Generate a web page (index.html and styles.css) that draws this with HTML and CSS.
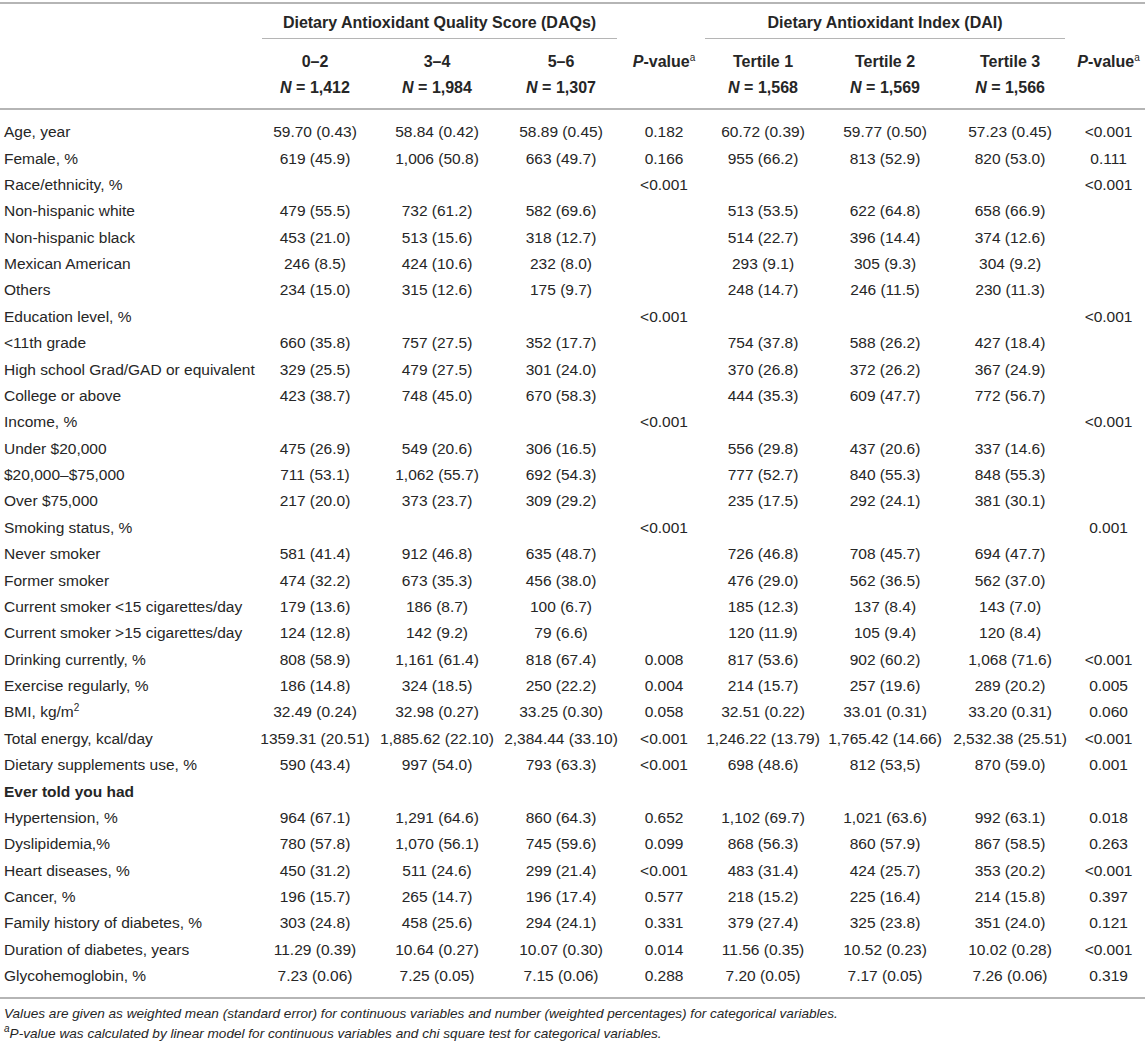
FILE: index.html
```html
<!DOCTYPE html>
<html>
<head>
<meta charset="utf-8">
<link rel="stylesheet" href="styles.css">
</head>
<body>
<table class="tbl">
  <colgroup>
    <col class="c-label"><col class="c-a"><col class="c-b"><col class="c-c"><col class="c-p1"><col class="c-t1"><col class="c-t2"><col class="c-t3"><col class="c-p2">
  </colgroup>
  <thead>
    <tr class="h1">
      <th></th>
      <th colspan="3"><div class="grp grp-a">Dietary Antioxidant Quality Score (DAQs)</div></th>
      <th></th>
      <th colspan="3"><div class="grp grp-b">Dietary Antioxidant Index (DAI)</div></th>
      <th></th>
    </tr>
    <tr class="h2">
      <th></th>
      <th>0–2<br><i>N</i> = 1,412</th>
      <th>3–4<br><i>N</i> = 1,984</th>
      <th>5–6<br><i>N</i> = 1,307</th>
      <th><i>P</i>-value<sup>a</sup></th>
      <th>Tertile 1<br><i>N</i> = 1,568</th>
      <th>Tertile 2<br><i>N</i> = 1,569</th>
      <th>Tertile 3<br><i>N</i> = 1,566</th>
      <th><i>P</i>-value<sup>a</sup></th>
    </tr>
  </thead>
  <tbody>
    <tr><td>Age, year</td><td>59.70 (0.43)</td><td>58.84 (0.42)</td><td>58.89 (0.45)</td><td>0.182</td><td>60.72 (0.39)</td><td>59.77 (0.50)</td><td>57.23 (0.45)</td><td>&lt;0.001</td></tr>
    <tr><td>Female, %</td><td>619 (45.9)</td><td>1,006 (50.8)</td><td>663 (49.7)</td><td>0.166</td><td>955 (66.2)</td><td>813 (52.9)</td><td>820 (53.0)</td><td>0.111</td></tr>
    <tr><td>Race/ethnicity, %</td><td></td><td></td><td></td><td>&lt;0.001</td><td></td><td></td><td></td><td>&lt;0.001</td></tr>
    <tr><td>Non-hispanic white</td><td>479 (55.5)</td><td>732 (61.2)</td><td>582 (69.6)</td><td></td><td>513 (53.5)</td><td>622 (64.8)</td><td>658 (66.9)</td><td></td></tr>
    <tr><td>Non-hispanic black</td><td>453 (21.0)</td><td>513 (15.6)</td><td>318 (12.7)</td><td></td><td>514 (22.7)</td><td>396 (14.4)</td><td>374 (12.6)</td><td></td></tr>
    <tr><td>Mexican American</td><td>246 (8.5)</td><td>424 (10.6)</td><td>232 (8.0)</td><td></td><td>293 (9.1)</td><td>305 (9.3)</td><td>304 (9.2)</td><td></td></tr>
    <tr><td>Others</td><td>234 (15.0)</td><td>315 (12.6)</td><td>175 (9.7)</td><td></td><td>248 (14.7)</td><td>246 (11.5)</td><td>230 (11.3)</td><td></td></tr>
    <tr><td>Education level, %</td><td></td><td></td><td></td><td>&lt;0.001</td><td></td><td></td><td></td><td>&lt;0.001</td></tr>
    <tr><td>&lt;11th grade</td><td>660 (35.8)</td><td>757 (27.5)</td><td>352 (17.7)</td><td></td><td>754 (37.8)</td><td>588 (26.2)</td><td>427 (18.4)</td><td></td></tr>
    <tr><td>High school Grad/GAD or equivalent</td><td>329 (25.5)</td><td>479 (27.5)</td><td>301 (24.0)</td><td></td><td>370 (26.8)</td><td>372 (26.2)</td><td>367 (24.9)</td><td></td></tr>
    <tr><td>College or above</td><td>423 (38.7)</td><td>748 (45.0)</td><td>670 (58.3)</td><td></td><td>444 (35.3)</td><td>609 (47.7)</td><td>772 (56.7)</td><td></td></tr>
    <tr><td>Income, %</td><td></td><td></td><td></td><td>&lt;0.001</td><td></td><td></td><td></td><td>&lt;0.001</td></tr>
    <tr><td>Under $20,000</td><td>475 (26.9)</td><td>549 (20.6)</td><td>306 (16.5)</td><td></td><td>556 (29.8)</td><td>437 (20.6)</td><td>337 (14.6)</td><td></td></tr>
    <tr><td>$20,000–$75,000</td><td>711 (53.1)</td><td>1,062 (55.7)</td><td>692 (54.3)</td><td></td><td>777 (52.7)</td><td>840 (55.3)</td><td>848 (55.3)</td><td></td></tr>
    <tr><td>Over $75,000</td><td>217 (20.0)</td><td>373 (23.7)</td><td>309 (29.2)</td><td></td><td>235 (17.5)</td><td>292 (24.1)</td><td>381 (30.1)</td><td></td></tr>
    <tr><td>Smoking status, %</td><td></td><td></td><td></td><td>&lt;0.001</td><td></td><td></td><td></td><td>0.001</td></tr>
    <tr><td>Never smoker</td><td>581 (41.4)</td><td>912 (46.8)</td><td>635 (48.7)</td><td></td><td>726 (46.8)</td><td>708 (45.7)</td><td>694 (47.7)</td><td></td></tr>
    <tr><td>Former smoker</td><td>474 (32.2)</td><td>673 (35.3)</td><td>456 (38.0)</td><td></td><td>476 (29.0)</td><td>562 (36.5)</td><td>562 (37.0)</td><td></td></tr>
    <tr><td>Current smoker &lt;15 cigarettes/day</td><td>179 (13.6)</td><td>186 (8.7)</td><td>100 (6.7)</td><td></td><td>185 (12.3)</td><td>137 (8.4)</td><td>143 (7.0)</td><td></td></tr>
    <tr><td>Current smoker &gt;15 cigarettes/day</td><td>124 (12.8)</td><td>142 (9.2)</td><td>79 (6.6)</td><td></td><td>120 (11.9)</td><td>105 (9.4)</td><td>120 (8.4)</td><td></td></tr>
    <tr><td>Drinking currently, %</td><td>808 (58.9)</td><td>1,161 (61.4)</td><td>818 (67.4)</td><td>0.008</td><td>817 (53.6)</td><td>902 (60.2)</td><td>1,068 (71.6)</td><td>&lt;0.001</td></tr>
    <tr><td>Exercise regularly, %</td><td>186 (14.8)</td><td>324 (18.5)</td><td>250 (22.2)</td><td>0.004</td><td>214 (15.7)</td><td>257 (19.6)</td><td>289 (20.2)</td><td>0.005</td></tr>
    <tr><td>BMI, kg/m<sup>2</sup></td><td>32.49 (0.24)</td><td>32.98 (0.27)</td><td>33.25 (0.30)</td><td>0.058</td><td>32.51 (0.22)</td><td>33.01 (0.31)</td><td>33.20 (0.31)</td><td>0.060</td></tr>
    <tr><td>Total energy, kcal/day</td><td>1359.31 (20.51)</td><td>1,885.62 (22.10)</td><td>2,384.44 (33.10)</td><td>&lt;0.001</td><td>1,246.22 (13.79)</td><td>1,765.42 (14.66)</td><td>2,532.38 (25.51)</td><td>&lt;0.001</td></tr>
    <tr><td>Dietary supplements use, %</td><td>590 (43.4)</td><td>997 (54.0)</td><td>793 (63.3)</td><td>&lt;0.001</td><td>698 (48.6)</td><td>812 (53,5)</td><td>870 (59.0)</td><td>0.001</td></tr>
    <tr><td class="sect">Ever told you had</td><td></td><td></td><td></td><td></td><td></td><td></td><td></td><td></td></tr>
    <tr><td>Hypertension, %</td><td>964 (67.1)</td><td>1,291 (64.6)</td><td>860 (64.3)</td><td>0.652</td><td>1,102 (69.7)</td><td>1,021 (63.6)</td><td>992 (63.1)</td><td>0.018</td></tr>
    <tr><td>Dyslipidemia,%</td><td>780 (57.8)</td><td>1,070 (56.1)</td><td>745 (59.6)</td><td>0.099</td><td>868 (56.3)</td><td>860 (57.9)</td><td>867 (58.5)</td><td>0.263</td></tr>
    <tr><td>Heart diseases, %</td><td>450 (31.2)</td><td>511 (24.6)</td><td>299 (21.4)</td><td>&lt;0.001</td><td>483 (31.4)</td><td>424 (25.7)</td><td>353 (20.2)</td><td>&lt;0.001</td></tr>
    <tr><td>Cancer, %</td><td>196 (15.7)</td><td>265 (14.7)</td><td>196 (17.4)</td><td>0.577</td><td>218 (15.2)</td><td>225 (16.4)</td><td>214 (15.8)</td><td>0.397</td></tr>
    <tr><td>Family history of diabetes, %</td><td>303 (24.8)</td><td>458 (25.6)</td><td>294 (24.1)</td><td>0.331</td><td>379 (27.4)</td><td>325 (23.8)</td><td>351 (24.0)</td><td>0.121</td></tr>
    <tr><td>Duration of diabetes, years</td><td>11.29 (0.39)</td><td>10.64 (0.27)</td><td>10.07 (0.30)</td><td>0.014</td><td>11.56 (0.35)</td><td>10.52 (0.23)</td><td>10.02 (0.28)</td><td>&lt;0.001</td></tr>
    <tr><td>Glycohemoglobin, %</td><td>7.23 (0.06)</td><td>7.25 (0.05)</td><td>7.15 (0.06)</td><td>0.288</td><td>7.20 (0.05)</td><td>7.17 (0.05)</td><td>7.26 (0.06)</td><td>0.319</td></tr>
  </tbody>
</table>
<div class="notes">
  <p>Values are given as weighted mean (standard error) for continuous variables and number (weighted percentages) for categorical variables.</p>
  <p><sup>a</sup>P-value was calculated by linear model for continuous variables and chi square test for categorical variables.</p>
</div>
</body>
</html>
```

FILE: styles.css
```css
html, body {
  margin: 0;
  padding: 0;
  background: #ffffff;
}
body {
  padding-top: 2px;
  font-family: "Liberation Sans", Arial, Helvetica, sans-serif;
  color: #262626;
  width: 1145px;
}
.tbl {
  width: 1145px;
  table-layout: fixed;
  border-collapse: collapse;
  border-top: 2px solid #b5b5b5;
  border-bottom: 2px solid #b5b5b5;
  font-size: 15.5px;
}
.c-label { width: 254px; }
.c-a { width: 122px; }
.c-b { width: 122px; }
.c-c { width: 126px; }
.c-p1 { width: 80px; }
.c-t1 { width: 118px; }
.c-t2 { width: 126px; }
.c-t3 { width: 124px; }
.c-p2 { width: 73px; }

th {
  font-weight: bold;
  font-size: 16px;
  padding: 0;
  text-align: center;
  vertical-align: top;
  line-height: 26px;
}
.h1 th {
  height: 38px;
  vertical-align: top;
}
.grp {
  padding-top: 5px;
  line-height: 28px;
  box-sizing: border-box;
  border-bottom: 1px solid #b5b5b5;
  height: 35px;
}
.grp-a { margin: 0 7px 0 8px; }
.grp-b { margin: 0 7px 0 1px; }
.h2 th {
  padding: 7px 0 7px;
  border-bottom: 2px solid #b5b5b5;
}
sup {
  font-size: 10px;
  line-height: 0;
  vertical-align: 6px;
}
th sup { font-weight: normal; }
td {
  padding: 0;
  height: 26.375px;
  line-height: 26px;
  text-align: center;
  white-space: nowrap;
}
td:first-child {
  text-align: left;
  padding-left: 4px;
}
tbody tr:first-child td { padding-top: 9px; }
tbody tr:last-child td { padding-bottom: 8px; }
.sect { font-weight: bold; }
.notes {
  padding: 5px 0 0 4px;
  font-style: italic;
  font-size: 13.6px;
  line-height: 20px;
}
.notes p { margin: 0; }
```
